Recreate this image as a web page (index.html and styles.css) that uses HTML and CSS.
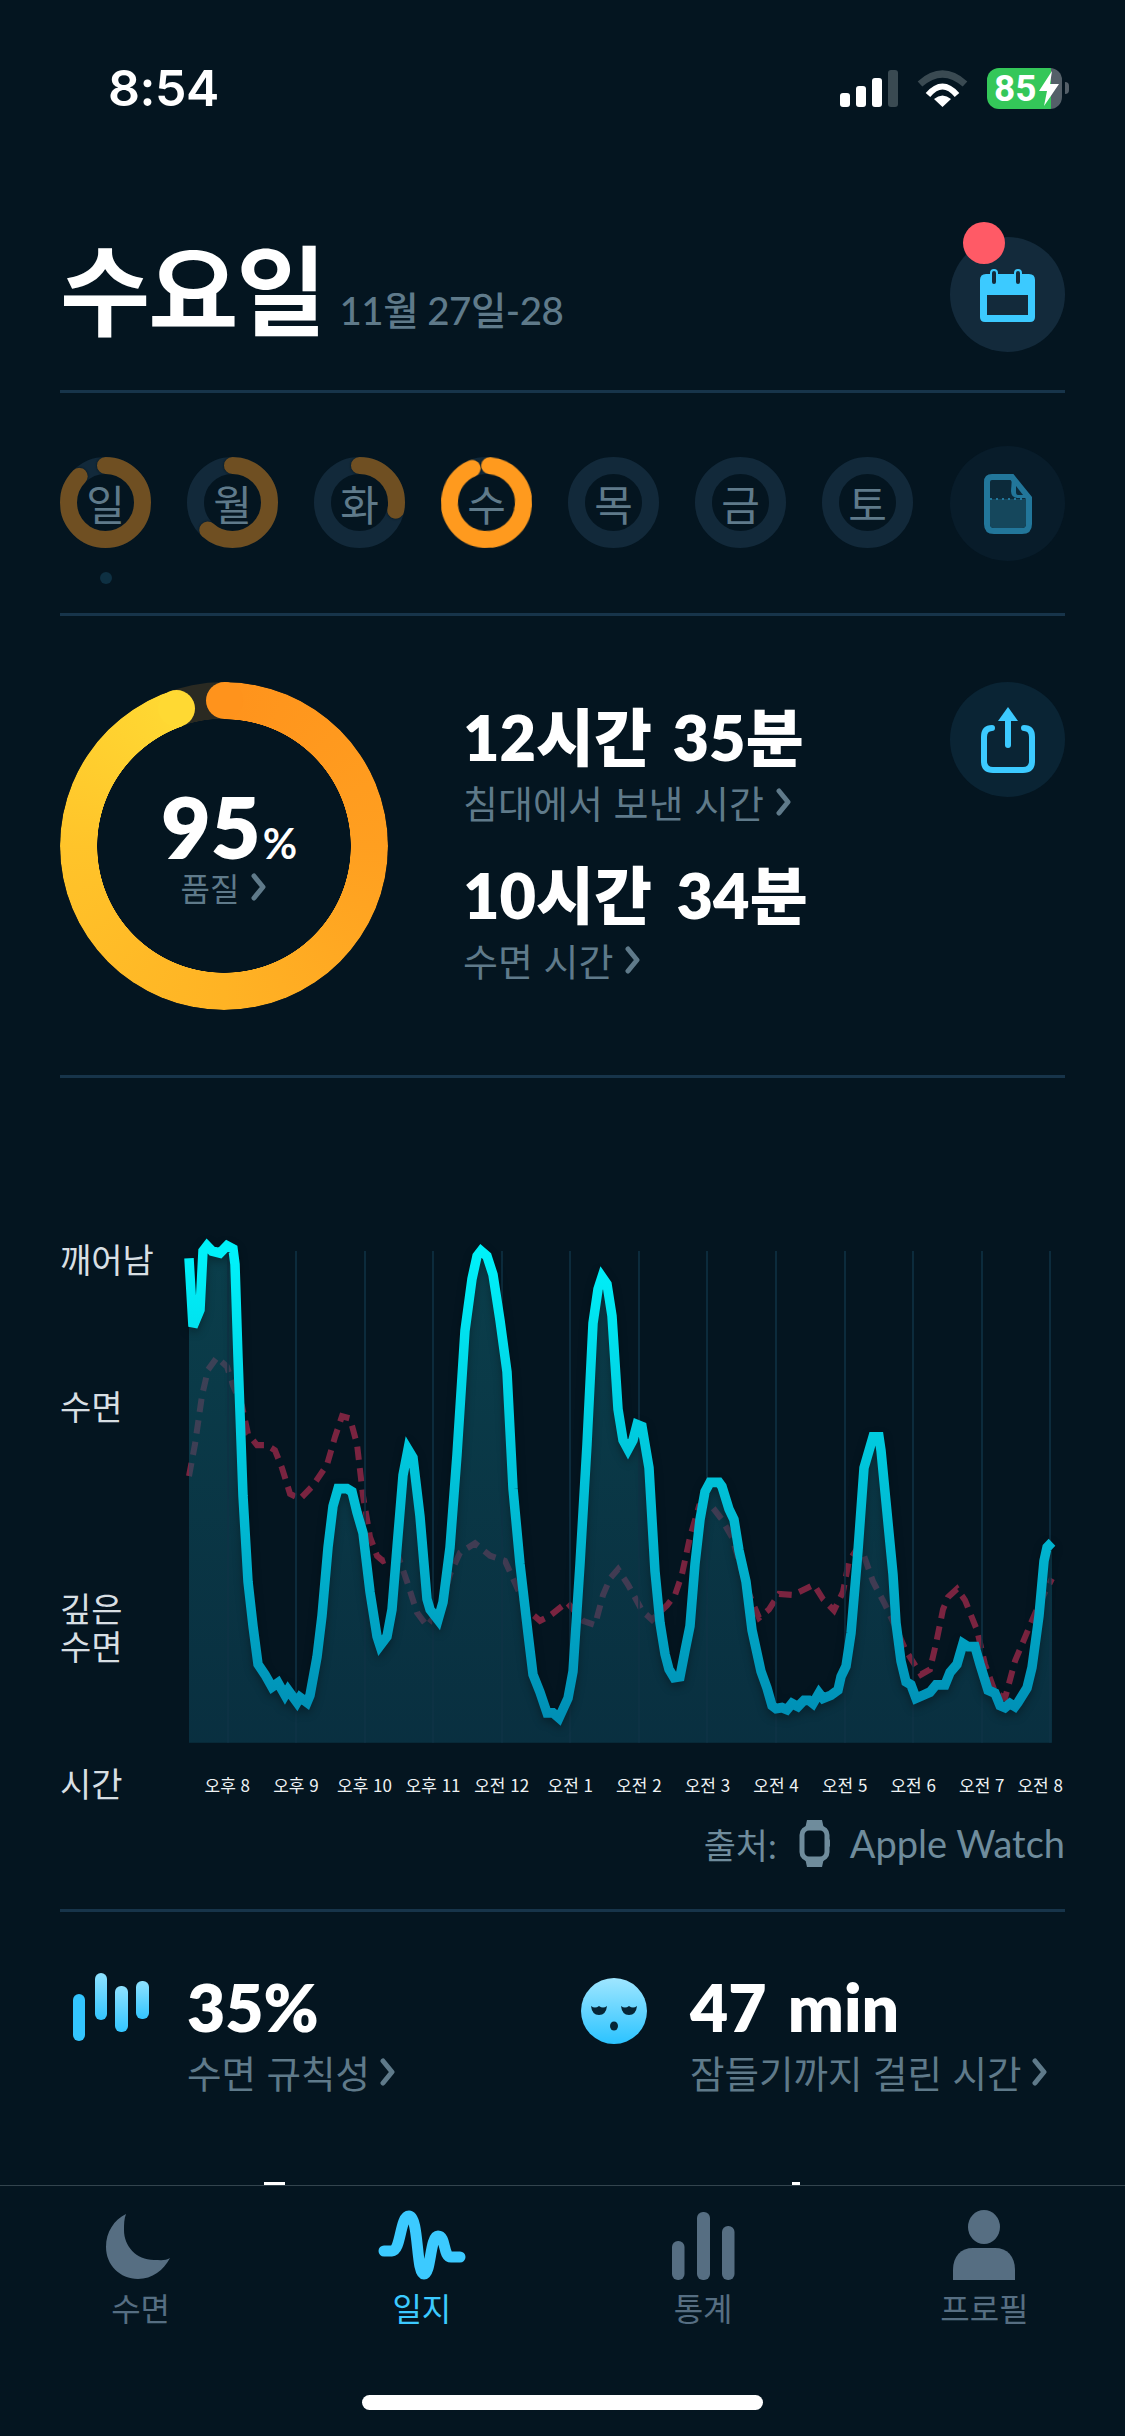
FILE: index.html
```html
<!DOCTYPE html>
<html lang="ko">
<head>
<meta charset="utf-8">
<title>수요일</title>
<link rel="stylesheet" href="styles.css">
</head>
<body>
<div class="screen">
  <header class="status">
    <span class="clock">8:54</span>
    <div class="status-icons">
      <div class="signal"><i class="b1"></i><i class="b2"></i><i class="b3"></i><i class="b4"></i></div>
      <svg class="wifi" width="51" height="37" viewBox="0 0 51 37"><path d="M3 14Q25.500-6 48 14" fill="none" stroke="#3a4a52" stroke-width="7"/><path d="M11 25Q25.500 8 40 25" fill="none" stroke="#fff" stroke-width="6"/><path d="M25.500 37L17 29Q25.500 22 34 29Z" fill="#fff"/></svg>
      <div class="battery"><span>85</span><svg width="20" height="35" viewBox="0 0 20 35"><path d="M13 0L0 20H8L5 35L20 13H11Z" fill="#fff"/></svg></div>
      <i class="nub"></i>
    </div>
  </header>

  <section class="head">
    <div class="title-wrap"><h1>수요일</h1><span class="date">11월 27일-28</span></div>
    <div class="round-btn cal">
      <i class="badge"></i>
      <svg width="55" height="54" viewBox="0 0 55 54"><path d="M6 5H49Q55 5 55 11V48Q55 53 50 53H5Q0 53 0 48V11Q0 5 6 5Z" fill="#3ccaff"/><rect x="7" y="26" width="41" height="20" fill="#132a3b"/><rect x="11" y="1" width="6" height="15" rx="3" fill="#132a3b" stroke="#3ccaff" stroke-width="2"/><rect x="35" y="1" width="6" height="15" rx="3" fill="#132a3b" stroke="#3ccaff" stroke-width="2"/></svg>
    </div>
  </section>

  <section class="days">
    <div class="day">
      <svg class="day-ring" width="91" height="91" viewBox="0 0 91 91"><circle class="track" cx="45.500" cy="45.500" r="37"/><circle class="arc dim" cx="45.500" cy="45.500" r="37" pathLength="360" stroke-dasharray="315 45" transform="rotate(-90 45.500 45.500)"/></svg>
      <span class="day-l">일</span><i class="day-dot"></i>
    </div>
    <div class="day">
      <svg class="day-ring" width="91" height="91" viewBox="0 0 91 91"><circle class="track" cx="45.500" cy="45.500" r="37"/><circle class="arc dim" cx="45.500" cy="45.500" r="37" pathLength="360" stroke-dasharray="222 138" transform="rotate(-90 45.500 45.500)"/></svg>
      <span class="day-l">월</span>
    </div>
    <div class="day">
      <svg class="day-ring" width="91" height="91" viewBox="0 0 91 91"><circle class="track" cx="45.500" cy="45.500" r="37"/><circle class="arc dim" cx="45.500" cy="45.500" r="37" pathLength="360" stroke-dasharray="102 258" transform="rotate(-90 45.500 45.500)"/></svg>
      <span class="day-l">화</span>
    </div>
    <div class="day">
      <svg class="day-ring" width="91" height="91" viewBox="0 0 91 91"><circle class="track" cx="45.500" cy="45.500" r="37"/><circle class="arc on" cx="45.500" cy="45.500" r="37" pathLength="360" stroke-dasharray="332 28" transform="rotate(-85 45.500 45.500)"/></svg>
      <span class="day-l">수</span>
    </div>
    <div class="day"><svg class="day-ring" width="91" height="91" viewBox="0 0 91 91"><circle class="track" cx="45.500" cy="45.500" r="37"/></svg><span class="day-l">목</span></div>
    <div class="day"><svg class="day-ring" width="91" height="91" viewBox="0 0 91 91"><circle class="track" cx="45.500" cy="45.500" r="37"/></svg><span class="day-l">금</span></div>
    <div class="day"><svg class="day-ring" width="91" height="91" viewBox="0 0 91 91"><circle class="track" cx="45.500" cy="45.500" r="37"/></svg><span class="day-l">토</span></div>
    <div class="round-btn file">
      <svg width="48" height="60" viewBox="0 0 48 60"><path d="M8 3H28L45 24V50Q45 57 38 57H10Q3 57 3 50V8Q3 3 8 3Z" fill="#0c2a3a" stroke="#22769a" stroke-width="6"/><path d="M6 25H42V50Q42 54 38 54H10Q6 54 6 50Z" fill="#15475c"/><path d="M6 25H42" stroke="#22769a" stroke-width="2" stroke-dasharray="2 4"/><path d="M28 3L45 24H34Q27 24 27 17Z" fill="#22769a"/><path d="M32 12L39 21H34Q32 21 32 18Z" fill="#0c2a3a"/></svg>
    </div>
  </section>

  <section class="summary">
    <div class="score">
      <div class="score-grad"></div>
      <i class="cap cap-a"></i><i class="cap cap-b"></i>
      <div class="score-txt">
        <div class="score-num">95<small>%</small></div>
        <div class="score-sub">품질 <svg class="chev" width="16" height="28" viewBox="0 0 16 28"><path d="M3 3L12 14L3 25"/></svg></div>
      </div>
    </div>
    <div class="totals">
      <div class="big">12시간 35분</div>
      <div class="sub">침대에서 보낸 시간 <svg class="chev" width="16" height="28" viewBox="0 0 16 28"><path d="M3 3L12 14L3 25"/></svg></div>
      <div class="big second">10시간 34분</div>
      <div class="sub">수면 시간 <svg class="chev" width="16" height="28" viewBox="0 0 16 28"><path d="M3 3L12 14L3 25"/></svg></div>
    </div>
    <div class="round-btn share">
      <svg width="54" height="66" viewBox="0 0 54 66"><path d="M11 21Q3 21 3 30V54Q3 63 12 63H42Q51 63 51 54V30Q51 21 43 21" fill="none" stroke="#3ccaff" stroke-width="6" stroke-linecap="round"/><path d="M27 38V10" stroke="#3ccaff" stroke-width="6" stroke-linecap="round"/><path d="M27 0L37 14H17Z" fill="#3ccaff"/></svg>
    </div>
  </section>

  <section class="chart">
    <div class="plot-row">
      <div class="y-labels">
        <div class="y-a">깨어남</div>
        <div class="y-b">수면</div>
        <div class="y-c">깊은<br>수면</div>
      </div>
      <svg class="plot" width="900" height="530" viewBox="180 1230 900 530">
        <defs>
          <linearGradient id="lg" gradientUnits="userSpaceOnUse" x1="0" y1="1250" x2="0" y2="1700"><stop offset="0" stop-color="#00f2fa"/><stop offset="1" stop-color="#0090b6"/></linearGradient>
          <linearGradient id="fg" gradientUnits="userSpaceOnUse" x1="0" y1="1250" x2="0" y2="1726"><stop offset="0" stop-color="#0f5a68" stop-opacity=".6"/><stop offset="1" stop-color="#0e4a60" stop-opacity=".5"/></linearGradient>
        </defs>
        <g transform="translate(0 1220) scale(1 1.0331) translate(0 -1220)">
        <polyline class="dash" points="189,1468 195,1437 202,1390 208,1365 217,1353 227,1362 233,1380 242,1400 248,1427 257,1438 267,1438 275,1443 282,1460 290,1485 300,1490 313,1477 327,1457 335,1430 342,1410 350,1412 357,1437 363,1487 370,1527 377,1545 383,1550 398,1545 407,1570 417,1600 427,1613 440,1597 450,1563 460,1542 475,1533 490,1545 505,1550 513,1567 527,1597 540,1608 550,1603 567,1590 583,1608 595,1612 603,1583 610,1567 618,1558 628,1573 642,1598 652,1607 667,1593 675,1583 682,1563 690,1527 699,1497 710,1495 722,1510 732,1527 747,1577 759,1605 769,1597 779,1582 793,1583 814,1573 823,1587 834,1598 843,1580 849,1550 858,1537 864,1545 873,1570 885,1592 895,1613 906,1637 921,1660 930,1655 936,1630 943,1597 948,1585 957,1577 965,1588 977,1617 985,1650 995,1677 1005,1683 1015,1647 1028,1617 1039,1592 1052,1567"/>
        <polygon class="area" points="189,1726 189,1257 193,1323 200,1307 203,1250 207,1245 212,1250 220,1252 227,1245 233,1248 235,1263 238,1353 243,1487 248,1570 253,1613 258,1650 265,1660 272,1672 278,1668 285,1680 288,1675 297,1687 300,1682 307,1687 310,1680 317,1643 322,1603 328,1537 333,1497 338,1480 347,1480 352,1483 357,1503 363,1523 370,1580 377,1623 380,1632 387,1623 392,1597 397,1537 403,1467 408,1442 413,1450 420,1507 427,1587 430,1597 438,1607 443,1590 450,1537 457,1447 465,1327 472,1277 477,1255 481,1250 487,1255 493,1273 500,1317 507,1367 513,1480 520,1553 528,1620 533,1660 540,1677 547,1697 553,1697 559,1702 568,1683 573,1657 580,1553 587,1437 593,1320 598,1287 602,1275 607,1282 612,1313 618,1403 623,1433 628,1442 633,1433 637,1418 642,1420 649,1460 655,1560 660,1610 665,1640 669,1655 674,1663 680,1662 685,1637 690,1613 695,1553 700,1510 705,1483 710,1474 719,1474 722,1478 729,1500 734,1510 739,1540 746,1570 752,1617 761,1657 767,1673 772,1690 776,1693 782,1692 787,1694 792,1688 798,1691 804,1685 809,1685 813,1688 819,1678 823,1683 831,1680 838,1675 841,1662 846,1652 851,1620 858,1540 864,1460 870,1440 873,1430 879,1430 881,1443 886,1493 893,1563 896,1610 901,1647 906,1667 911,1670 916,1683 923,1680 930,1677 936,1670 945,1670 950,1658 957,1650 963,1630 968,1633 975,1633 980,1650 988,1675 995,1678 1000,1690 1005,1692 1010,1688 1015,1691 1018,1687 1027,1673 1032,1653 1039,1603 1044,1550 1047,1537 1052,1532 1052,1726"/>
        <path class="grid" d="M228 1250V1726M296 1250V1726M365 1250V1726M433 1250V1726M502 1250V1726M570 1250V1726M639 1250V1726M707 1250V1726M776 1250V1726M845 1250V1726M913 1250V1726M982 1250V1726M1050 1250V1726"/>
        <polyline class="line" points="189,1257 193,1323 200,1307 203,1250 207,1245 212,1250 220,1252 227,1245 233,1248 235,1263 238,1353 243,1487 248,1570 253,1613 258,1650 265,1660 272,1672 278,1668 285,1680 288,1675 297,1687 300,1682 307,1687 310,1680 317,1643 322,1603 328,1537 333,1497 338,1480 347,1480 352,1483 357,1503 363,1523 370,1580 377,1623 380,1632 387,1623 392,1597 397,1537 403,1467 408,1442 413,1450 420,1507 427,1587 430,1597 438,1607 443,1590 450,1537 457,1447 465,1327 472,1277 477,1255 481,1250 487,1255 493,1273 500,1317 507,1367 513,1480 520,1553 528,1620 533,1660 540,1677 547,1697 553,1697 559,1702 568,1683 573,1657 580,1553 587,1437 593,1320 598,1287 602,1275 607,1282 612,1313 618,1403 623,1433 628,1442 633,1433 637,1418 642,1420 649,1460 655,1560 660,1610 665,1640 669,1655 674,1663 680,1662 685,1637 690,1613 695,1553 700,1510 705,1483 710,1474 719,1474 722,1478 729,1500 734,1510 739,1540 746,1570 752,1617 761,1657 767,1673 772,1690 776,1693 782,1692 787,1694 792,1688 798,1691 804,1685 809,1685 813,1688 819,1678 823,1683 831,1680 838,1675 841,1662 846,1652 851,1620 858,1540 864,1460 870,1440 873,1430 879,1430 881,1443 886,1493 893,1563 896,1610 901,1647 906,1667 911,1670 916,1683 923,1680 930,1677 936,1670 945,1670 950,1658 957,1650 963,1630 968,1633 975,1633 980,1650 988,1675 995,1678 1000,1690 1005,1692 1010,1688 1015,1691 1018,1687 1027,1673 1032,1653 1039,1603 1044,1550 1047,1537 1052,1532"/>
        </g>
      </svg>
    </div>
    <div class="axis">
      <div class="axis-title">시간</div>
      <div class="ticks"><span>오후 8</span><span>오후 9</span><span>오후 10</span><span>오후 11</span><span>오전 12</span><span>오전 1</span><span>오전 2</span><span>오전 3</span><span>오전 4</span><span>오전 5</span><span>오전 6</span><span>오전 7</span><span>오전 8</span></div>
    </div>
    <div class="source">
      <span>출처:</span>
      <svg width="31" height="47" viewBox="0 0 31 47"><path d="M8 0H23L25 9H6Z" fill="#6f8c9c"/><path d="M6 38H25L23 47H8Z" fill="#6f8c9c"/><rect x="3" y="8" width="25" height="31" rx="7" fill="#041520" stroke="#6f8c9c" stroke-width="5"/><rect x="28" y="19" width="3" height="8" rx="1.500" fill="#6f8c9c"/></svg>
      <span class="source-name">Apple Watch</span>
    </div>
  </section>

  <section class="metrics">
    <div class="metric m1">
      <svg class="m-icon" width="76" height="68" viewBox="0 0 76 68">
        <defs><linearGradient id="bg" x1="0" y1="0" x2="0" y2="1"><stop offset="0" stop-color="#8fe2ff"/><stop offset="1" stop-color="#33c5ff"/></linearGradient></defs>
        <rect x="0" y="21" width="12" height="47" rx="6" fill="#33c5ff"/><rect x="22" y="0" width="12" height="47" rx="6" fill="url(#bg)"/><rect x="42" y="13" width="13" height="46" rx="6" fill="url(#bg)"/><rect x="63" y="8" width="13" height="38" rx="6" fill="url(#bg)"/>
      </svg>
      <div><div class="big">35%</div><div class="sub">수면 규칙성 <svg class="chev" width="16" height="28" viewBox="0 0 16 28"><path d="M3 3L12 14L3 25"/></svg></div></div>
    </div>
    <div class="metric m2">
      <svg class="m-icon face" width="66" height="66" viewBox="0 0 66 66">
        <defs><linearGradient id="fc" x1="0" y1="0" x2="0" y2="1"><stop offset="0" stop-color="#9fe6ff"/><stop offset="1" stop-color="#2bc3ff"/></linearGradient></defs>
        <circle cx="33" cy="33" r="33" fill="url(#fc)"/><path d="M10 28Q14 31 18 28Q22 31 26 28Q25 37 18 37Q11 37 10 28Z" fill="#062536"/><path d="M40 28Q44 31 48 28Q52 31 56 28Q55 37 48 37Q41 37 40 28Z" fill="#062536"/><ellipse cx="33" cy="48" rx="4" ry="4.500" fill="#062536"/>
      </svg>
      <div><div class="big">47 min</div><div class="sub">잠들기까지 걸린 시간 <svg class="chev" width="16" height="28" viewBox="0 0 16 28"><path d="M3 3L12 14L3 25"/></svg></div></div>
    </div>
  </section>
  <div class="peek"><i class="p1"></i><i class="p2"></i></div>

  <nav class="tabs">
    <div class="tab">
      <svg class="moon" width="64" height="70" viewBox="0 0 64 70"><path d="M20 4C8 10 0 22 0 37C0 55 14 69 32 69C46 69 58 60 64 48C60 51 54 50 48 50C30 50 18 36 18 20C18 14 18 9 20 4Z" fill="#566e82"/></svg>
      <span>수면</span>
    </div>
    <div class="tab active">
      <svg width="88" height="70" viewBox="0 0 88 70"><path d="M6 41H14C23 41 22 6 31 6C41 6 38 64 46 64C53 64 52 26 60 26C68 26 65 47 73 47H82" fill="none" stroke="#3ccaff" stroke-width="11" stroke-linecap="round" stroke-linejoin="round"/></svg>
      <span>일지</span>
    </div>
    <div class="tab">
      <svg width="64" height="70" viewBox="0 0 64 70"><rect x="1" y="31" width="12.500" height="39" rx="6" fill="#566e82"/><rect x="26" y="2" width="13" height="68" rx="6" fill="#566e82"/><rect x="51" y="16" width="12.500" height="54" rx="6" fill="#566e82"/></svg>
      <span>통계</span>
    </div>
    <div class="tab">
      <svg width="62" height="70" viewBox="0 0 62 70"><ellipse cx="31" cy="17" rx="16" ry="17" fill="#566e82"/><path d="M0 70V60C0 46 8 38 20 38H42C54 38 62 46 62 60V70Z" fill="#566e82"/></svg>
      <span>프로필</span>
    </div>
  </nav>
  <div class="home-wrap"><i class="home"></i></div>
</div>
</body>
</html>
```

FILE: styles.css
```css
* { box-sizing: border-box; }
html, body { margin: 0; padding: 0; background: #041520; }
body { font-family: "Lato", "Noto Sans CJK KR", sans-serif; color: #fff; }
i { display: block; }
svg { display: block; }
.screen { width: 1125px; height: 2436px; overflow: hidden; display: flex; flex-direction: column; position: relative; }

.status { height: 176px; padding: 0 56px 0 108px; display: flex; justify-content: space-between; align-items: center; flex: none; }
.clock { font-family: "Inter", sans-serif; font-weight: 600; font-size: 50px; letter-spacing: -.5px; }
.status-icons { display: flex; align-items: center; }
.signal { display: flex; align-items: flex-end; gap: 6px; height: 37px; margin-right: 19px; }
.signal i { width: 10px; border-radius: 3px; background: #fff; }
.signal .b1 { height: 14px; } .signal .b2 { height: 21px; } .signal .b3 { height: 29px; }
.signal .b4 { height: 37px; background: #3a4a52; }
.wifi { margin-right: 19px; }
.battery { width: 75px; height: 41px; border-radius: 12px; background: linear-gradient(90deg, #34c759 0 64px, #545f68 64px); display: flex; align-items: center; padding-left: 7px; gap: 3px; }
.battery span { font-family: "Roboto", sans-serif; font-weight: 700; font-size: 37px; line-height: 41px; }
.nub { width: 4px; height: 12px; margin-left: 3px; background: #545f68; border-radius: 0 4px 4px 0; }

.head { flex: none; height: 217px; margin: 0 60px; padding-top: 61px; display: flex; justify-content: space-between; align-items: flex-start; border-bottom: 3px solid #17344a; }
.title-wrap { display: flex; align-items: baseline; gap: 15px; margin-top: -15px; }
h1 { margin: 0; font-family: "Noto Sans CJK KR", sans-serif; font-weight: 700; font-size: 98px; line-height: 126px; letter-spacing: -2px; }
.date { font-size: 38.500px; color: #5f7a8a; font-weight: 500; position: relative; top: -3px; letter-spacing: -.5px; }
.round-btn { width: 115px; height: 115px; border-radius: 50%; display: flex; align-items: center; justify-content: center; position: relative; flex: none; }
.cal { background: #132a3b; }
.cal svg { margin-top: 2px; }
.badge { position: absolute; left: 13px; top: -15px; width: 42px; height: 42px; border-radius: 50%; background: #ff5a66; }

.days { flex: none; height: 223px; margin: 0 60px; padding-top: 64px; display: flex; gap: 36px; align-items: flex-start; border-bottom: 3px solid #17344a; }
.day { width: 91px; height: 91px; position: relative; display: flex; align-items: center; justify-content: center; flex: none; }
.day-ring { position: absolute; left: 0; top: 0; }
.track { fill: none; stroke: #12293a; stroke-width: 17; }
.arc { fill: none; stroke-width: 17; stroke-linecap: round; filter: drop-shadow(0 0 1.500px #041520); }
.dim { stroke: #6f4f22; }
.on { stroke: #ff9a1e; }
.day-l { position: relative; font-family: "Noto Sans CJK KR", sans-serif; font-size: 42px; line-height: 1; color: #5f7a8a; }
.day-dot { position: absolute; left: 40px; top: 115px; width: 12px; height: 12px; border-radius: 50%; background: #0e3042; }
.file { margin-left: auto; margin-top: -11px; background: #081c2a; }

.summary { flex: none; height: 462px; margin: 0 60px; padding-top: 66px; display: flex; align-items: flex-start; border-bottom: 3px solid #17344a; }
.score { width: 328px; height: 328px; flex: none; position: relative; border-radius: 50%; background: radial-gradient(closest-side, transparent 127px, #2a2a22 127.500px); }
.score-grad { position: absolute; inset: 0; border-radius: 50%; background: conic-gradient(#ff931c 0deg, #ff9f20 90deg, #ffb324 180deg, #ffc42a 270deg, #ffd933 341deg, transparent 341deg); -webkit-mask: radial-gradient(closest-side, transparent 126.500px, #000 127px); mask: radial-gradient(closest-side, transparent 126.500px, #000 127px); }
.cap { position: absolute; width: 37px; height: 37px; border-radius: 50%; }
.cap-a { left: 145.500px; top: 0; background: #ff931c; }
.cap-b { left: 98px; top: 8px; background: #ffd933; }
.score-txt { position: absolute; inset: 0; padding-top: 104px; display: flex; flex-direction: column; align-items: center; }
.score-num { font-size: 86px; font-weight: 800; line-height: 80px; margin-left: 10px; white-space: nowrap; }
.score-num small { font-size: 42px; font-weight: 700; margin-left: 2px; }
.score-sub { font-family: "Noto Sans CJK KR", sans-serif; font-size: 32px; line-height: 36px; margin-top: -14px; color: #5f7a8a; display: flex; align-items: center; gap: 12px; }
.chev { fill: none; stroke: #5f7a8a; stroke-width: 5; stroke-linecap: round; stroke-linejoin: round; flex: none; }
.totals { margin-left: 75px; padding-top: 17px; }
.big { font-family: "Lato", "Noto Sans CJK KR", sans-serif; font-size: 63px; font-weight: 800; line-height: 76px; white-space: nowrap; word-spacing: 6px; }
.big.second { word-spacing: 10px; }
.sub { font-family: "Noto Sans CJK KR", sans-serif; font-size: 38px; line-height: 50px; margin-top: 2px; color: #5f7a8a; display: flex; align-items: center; gap: 12px; white-space: nowrap; }
.second { margin-top: 30px; }
.share { margin-left: auto; background: #0a2434; }

.chart { flex: none; height: 834px; margin: 0 60px; padding-top: 152px; display: flex; flex-direction: column; border-bottom: 3px solid #17344a; }
.plot-row { display: flex; height: 530px; }
.y-labels { width: 120px; flex: none; font-family: "Noto Sans CJK KR", sans-serif; font-size: 34px; color: #d8dfe3; }
.y-a { line-height: 50px; margin-top: 4px; white-space: nowrap; }
.y-b { line-height: 50px; margin-top: 97px; }
.y-c { line-height: 38px; margin-top: 158px; }
.plot { flex: none; }
.dash { fill: none; stroke: #7a2440; stroke-width: 6; stroke-dasharray: 13 8; }
.area { fill: url(#fg); }
.grid { stroke: #0f3345; stroke-width: 1.500; fill: none; }
.line { fill: none; stroke: url(#lg); stroke-width: 9.500; stroke-linejoin: miter; stroke-miterlimit: 3; filter: drop-shadow(0 4px 4px rgba(0,0,0,.3)); }
.axis { display: flex; height: 44px; align-items: center; }
.axis-title { width: 133px; flex: none; font-family: "Noto Sans CJK KR", sans-serif; font-size: 34px; color: #d8dfe3; }
.ticks { display: grid; grid-template-columns: repeat(12, 68.600px) 48px; font-family: "Noto Sans CJK KR", sans-serif; font-size: 17px; text-align: center; color: #eef2f4; white-space: nowrap; margin-top: 4px; }
.ticks span { display: flex; justify-content: center; }
.source { display: flex; justify-content: flex-end; align-items: center; gap: 22px; height: 44px; margin-top: 17px; font-family: "Lato", "Noto Sans CJK KR", sans-serif; font-size: 35px; color: #6f8c9c; }
.source-name { font-size: 38px; margin-left: -2px; }

.metrics { flex: none; height: 270px; padding: 57px 0 0 73px; display: grid; grid-template-columns: 508px 1fr; }
.metric { display: flex; align-items: flex-start; }
.metric .big { font-size: 66px; word-spacing: 6px; }
.metric .sub { font-size: 37.500px; gap: 10px; }
.m-icon { margin-top: 4px; flex: none; }
.m1 .m-icon { margin-right: 38px; }
.face { margin-top: 9px; margin-right: 43px; }

.peek { flex: none; height: 3px; display: flex; }
.peek i { height: 3px; background: #fff; }
.p1 { width: 21px; margin-left: 264px; }
.p2 { width: 8px; margin-left: 507px; }

.tabs { flex: none; height: 210px; border-top: 1px solid #33444e; padding-top: 24px; display: grid; grid-template-columns: repeat(4, 1fr); }
.tab { display: flex; flex-direction: column; align-items: center; font-family: "Noto Sans CJK KR", sans-serif; font-size: 32px; line-height: 44px; color: #566e82; }
.tab span { margin-top: 5px; }
.moon { margin-left: -6px; }
.active { color: #3ccaff; }
.home-wrap { flex: none; display: flex; justify-content: center; }
.home { width: 401px; height: 15px; border-radius: 8px; background: #fff; }
```
